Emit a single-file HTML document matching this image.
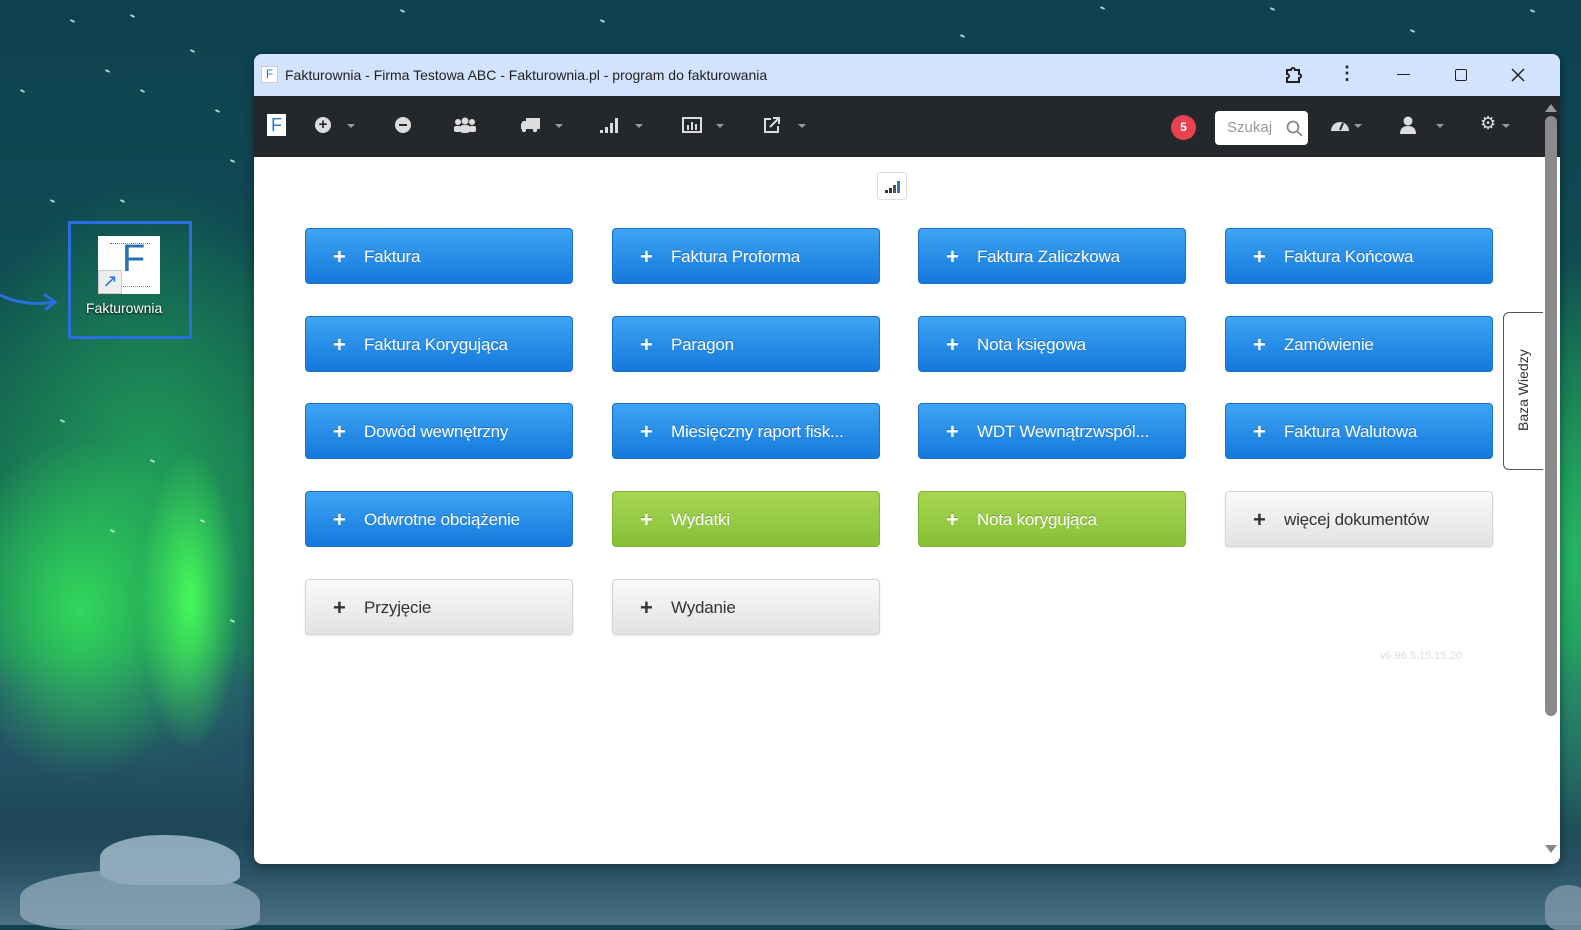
<!DOCTYPE html>
<html><head><meta charset="utf-8"><style>
*{box-sizing:border-box;margin:0;padding:0}
body{width:1581px;height:925px;overflow:hidden;position:relative;font-family:"Liberation Sans",Arial,sans-serif;background:#0f4150}
.bg{position:absolute;left:0;top:0;width:1581px;height:925px;
background:
radial-gradient(ellipse 50px 150px at 190px 600px,rgba(70,250,90,1),rgba(50,230,90,0) 100%),
radial-gradient(ellipse 130px 170px at 80px 610px,rgba(50,220,90,.95),rgba(40,200,90,0) 100%),
radial-gradient(ellipse 200px 300px at 150px 480px,rgba(35,170,90,.8),rgba(30,150,90,0) 100%),
radial-gradient(ellipse 60px 300px at 1575px 560px,rgba(40,200,100,.8),rgba(40,200,100,0) 100%),
linear-gradient(180deg,#0f4150 0%,#0f4a52 25%,#146050 45%,#1a7458 60%,#1d6e5e 70%,#24566a 74%,#234f62 84%,#1d4656 90%,#2e566a 95%,#4d7185 100%);}
.ice{position:absolute;background:#a9c0ce;border-radius:50% 60% 20% 30%;opacity:.8}
.star{position:absolute;width:5px;height:2px;background:#cfe;border-radius:1px;transform:rotate(25deg);opacity:.8}
.win{position:absolute;left:254px;top:54px;width:1306px;height:810px;background:#fff;border-radius:8px;overflow:hidden;box-shadow:0 2px 10px rgba(0,0,0,.4)}
.title{height:42px;background:#d3e3fd;position:relative;font-size:14px;color:#1f1f1f}
.title .t{position:absolute;left:31px;top:13px}
.fav{position:absolute;left:7px;top:12px;width:17px;height:17px;background:#fff;border:1px solid #ccc;color:#2b7bc0;font-size:12px;text-align:center;line-height:15px}
.tb{position:absolute;top:42px;left:0;width:1306px;height:61px;background:#24282c}
.ic{position:absolute;color:#ddd;font-size:16px;top:20px}
.car{position:absolute;top:28px;width:0;height:0;border-left:4px solid transparent;border-right:4px solid transparent;border-top:4px solid #999}
.btn{position:absolute;width:268px;height:56px;border-radius:4px;font-size:17px;color:#fff;text-shadow:0 -1px 0 rgba(0,0,0,.25);line-height:56px;padding-left:58px;white-space:nowrap;letter-spacing:-.2px}
.btn b{position:absolute;left:27px;top:0;font-size:22px;font-weight:bold}
.blue{background:linear-gradient(#3ea4f4,#1479dc);border:1px solid #1a70c8}
.green{background:linear-gradient(#a6d652,#88c038);border:1px solid #80b636}
.grey{background:linear-gradient(#fafafa,#e2e2e2);border:1px solid #d4d4d4;color:#333;text-shadow:none;box-shadow:0 1px 2px rgba(0,0,0,.1)}
</style></head><body>
<div class="bg"></div>
<div class="ice" style="left:100px;top:835px;width:140px;height:50px"></div>
<div class="ice" style="left:20px;top:870px;width:240px;height:60px;background:#8fa9b8"></div>
<div class="ice" style="left:1545px;top:885px;width:50px;height:45px;background:#7e98a8"></div>
<div class="star" style="left:70px;top:20px"></div><div class="star" style="left:130px;top:15px"></div><div class="star" style="left:105px;top:70px"></div><div class="star" style="left:190px;top:50px"></div><div class="star" style="left:140px;top:90px"></div><div class="star" style="left:215px;top:110px"></div><div class="star" style="left:50px;top:200px"></div><div class="star" style="left:120px;top:200px"></div><div class="star" style="left:230px;top:160px"></div><div class="star" style="left:20px;top:90px"></div><div class="star" style="left:60px;top:420px"></div><div class="star" style="left:150px;top:460px"></div><div class="star" style="left:200px;top:520px"></div><div class="star" style="left:110px;top:530px"></div><div class="star" style="left:230px;top:620px"></div><div class="star" style="left:1100px;top:7px"></div><div class="star" style="left:1270px;top:8px"></div><div class="star" style="left:1410px;top:30px"></div><div class="star" style="left:1530px;top:10px"></div><div class="star" style="left:960px;top:35px"></div><div class="star" style="left:600px;top:20px"></div><div class="star" style="left:400px;top:10px"></div>
<svg style="position:absolute;left:0;top:285px" width="62" height="30"><path d="M0 10 Q25 22 54 17" fill="none" stroke="#2a6ee0" stroke-width="3"/><path d="M44 9 L55 17 L45 25" fill="none" stroke="#2a6ee0" stroke-width="3"/></svg>
<div style="position:absolute;left:68px;top:221px;width:124px;height:118px;border:3px solid #2a6ee0"></div>
<div style="position:absolute;left:98px;top:236px;width:62px;height:58px;background:#fff"><div style="position:absolute;left:12px;top:7px;width:40px;border-top:1px dotted #c55"></div><div style="position:absolute;left:24px;top:3px;font-size:38px;color:#2b6fb3;line-height:40px">F</div><div style="position:absolute;left:12px;top:50px;width:40px;border-top:1px dotted #c55"></div><div style="position:absolute;left:0;top:34px;width:24px;height:24px;background:#eee;border:1px solid #ccc;color:#1a7ad8;font-size:18px;line-height:20px;text-align:center">↗</div></div>
<div style="position:absolute;left:86px;top:300px;font-size:14px;color:#fff;text-shadow:0 1px 2px #000">Fakturownia</div>

<div class="win">
<div class="title"><div class="fav">F</div><div class="t">Fakturownia - Firma Testowa ABC - Fakturownia.pl - program do fakturowania</div>
<svg style="position:absolute;left:1028px;top:11px" width="22" height="22"><path d="M5 5 H9 a2 2 0 0 1 4 0 H17 V9 a2 2 0 0 1 0 4 V17 H5 V13 a2 2 0 0 0 0 -4 Z" fill="none" stroke="#222" stroke-width="2"/></svg>
<div style="position:absolute;left:1084px;top:9px;font-size:18px;font-weight:bold">⋮</div>
<div style="position:absolute;left:1143px;top:20px;width:13px;border-top:1.5px solid #222"></div>
<div style="position:absolute;left:1201px;top:15px;width:12px;height:12px;border:1.5px solid #222;border-radius:2px"></div>
<svg style="position:absolute;left:1257px;top:14px" width="14" height="14"><path d="M1 1 L13 13 M13 1 L1 13" stroke="#222" stroke-width="1.5"/></svg>
</div>
<div class="tb">
<div style="position:absolute;left:13px;top:18px;width:19px;height:22px;background:#fff;color:#2b7bc0;font-size:18px;text-align:center;line-height:22px">F</div>
<div style="position:absolute;left:61px;top:21px;width:16px;height:16px;border-radius:50%;background:#ddd;color:#24282c;font-size:15px;font-weight:bold;text-align:center;line-height:16px">+</div><div class="car" style="left:93px"></div>
<div style="position:absolute;left:141px;top:21px;width:16px;height:16px;border-radius:50%;background:#ddd"><div style="margin:7px 4px;height:2px;background:#24282c"></div></div>
<svg style="position:absolute;left:200px;top:20px" width="22" height="18"><circle cx="11" cy="5" r="3.5" fill="#ddd"/><circle cx="4" cy="6" r="3" fill="#ddd"/><circle cx="18" cy="6" r="3" fill="#ddd"/><rect x="6" y="9" width="10" height="8" rx="3" fill="#ddd"/><rect x="0" y="10" width="7" height="6" rx="2" fill="#ddd"/><rect x="15" y="10" width="7" height="6" rx="2" fill="#ddd"/></svg>
<svg style="position:absolute;left:266px;top:21px" width="20" height="16"><rect x="6" y="1" width="14" height="11" fill="#ddd"/><path d="M1 12 V7 L3 4 H6 V12Z" fill="#ddd"/><circle cx="4" cy="13" r="2.2" fill="#ddd"/><circle cx="15" cy="13" r="2.2" fill="#ddd"/></svg><div class="car" style="left:301px"></div>
<svg style="position:absolute;left:346px;top:21px" width="20" height="16"><rect x="0" y="13" width="3" height="3" fill="#ddd"/><rect x="5" y="10" width="3" height="6" fill="#ddd"/><rect x="10" y="6" width="3" height="10" fill="#ddd"/><rect x="15" y="1" width="3" height="15" fill="#ddd"/></svg><div class="car" style="left:381px"></div>
<svg style="position:absolute;left:428px;top:21px" width="20" height="16"><rect x="1" y="1" width="18" height="14" fill="none" stroke="#ddd" stroke-width="2"/><rect x="5" y="8" width="2" height="5" fill="#ddd"/><rect x="9" y="5" width="2" height="8" fill="#ddd"/><rect x="13" y="7" width="2" height="6" fill="#ddd"/></svg><div class="car" style="left:462px"></div>
<svg style="position:absolute;left:509px;top:20px" width="18" height="18"><path d="M8 3 H2 V16 H15 V10" fill="none" stroke="#ddd" stroke-width="2"/><path d="M7 11 L16 2 M10 2 H16 V8" fill="none" stroke="#ddd" stroke-width="2"/></svg><div class="car" style="left:544px"></div>
<div style="position:absolute;left:917px;top:19px;width:25px;height:25px;border-radius:50%;background:#e8414f;color:#fff;font-size:12px;font-weight:bold;text-align:center;line-height:25px">5</div>
<div style="position:absolute;left:961px;top:15px;width:93px;height:34px;border-radius:4px;background:#fff;color:#999;font-size:15px;line-height:34px;padding-left:12px">Szukaj<svg style="position:absolute;right:5px;top:9px" width="17" height="17"><circle cx="7" cy="7" r="5.5" fill="none" stroke="#888" stroke-width="1.8"/><path d="M11 11 L16 16" stroke="#888" stroke-width="1.8"/></svg></div>
<svg style="position:absolute;left:1076px;top:22px" width="20" height="14"><path d="M1 13 A9 9 0 0 1 19 13 Z" fill="#ddd"/><path d="M10 12 L13 5" stroke="#24282c" stroke-width="2"/></svg><div class="car" style="left:1100px"></div>
<svg style="position:absolute;left:1146px;top:20px" width="16" height="18"><circle cx="8" cy="5" r="4.5" fill="#ddd"/><path d="M0 18 Q0 10 8 10 Q16 10 16 18Z" fill="#ddd"/></svg><div class="car" style="left:1182px"></div>
<div class="ic" style="left:1226px;top:17px;font-size:18px">⚙</div><div class="car" style="left:1248px"></div>
<div style="position:absolute;left:1291px;top:8px;width:0;height:0;border-left:6px solid transparent;border-right:6px solid transparent;border-bottom:8px solid #999"></div>
</div>
<div style="position:absolute;left:1291px;top:62px;width:12px;height:600px;background:#8a8a8a;border-radius:6px"></div>
<div style="position:absolute;left:1291px;top:791px;width:0;height:0;border-left:6px solid transparent;border-right:6px solid transparent;border-top:8px solid #888"></div>
<div style="position:absolute;left:623px;top:118px;width:30px;height:28px;border:1px solid #ddd;border-radius:3px"><svg style="position:absolute;left:7px;top:7px" width="16" height="13"><rect x="0" y="10" width="3" height="3" fill="#333"/><rect x="4" y="8" width="3" height="5" fill="#333"/><rect x="8" y="5" width="3" height="8" fill="#555"/><rect x="12" y="1" width="3" height="12" fill="#3b6fb6"/></svg></div>
<div style="position:absolute;left:1249px;top:258px;width:40px;height:158px;border:1px solid #555;border-right:none;border-radius:6px 0 0 6px;background:#fff"><div style="position:absolute;left:11px;top:118px;transform:rotate(-90deg);transform-origin:0 0;font-size:14px;color:#333;white-space:nowrap">Baza Wiedzy</div></div>
<div style="position:absolute;left:1126px;top:596px;font-size:11px;color:#ddd">v6.96.5.15.15.20</div>
</div>

<div class="btn blue" style="left:305px;top:228px"><b>+</b>Faktura</div>
<div class="btn blue" style="left:612px;top:228px"><b>+</b>Faktura Proforma</div>
<div class="btn blue" style="left:918px;top:228px"><b>+</b>Faktura Zaliczkowa</div>
<div class="btn blue" style="left:1225px;top:228px"><b>+</b>Faktura Końcowa</div>
<div class="btn blue" style="left:305px;top:316px"><b>+</b>Faktura Korygująca</div>
<div class="btn blue" style="left:612px;top:316px"><b>+</b>Paragon</div>
<div class="btn blue" style="left:918px;top:316px"><b>+</b>Nota księgowa</div>
<div class="btn blue" style="left:1225px;top:316px"><b>+</b>Zamówienie</div>
<div class="btn blue" style="left:305px;top:403px"><b>+</b>Dowód wewnętrzny</div>
<div class="btn blue" style="left:612px;top:403px"><b>+</b>Miesięczny raport fisk...</div>
<div class="btn blue" style="left:918px;top:403px"><b>+</b>WDT Wewnątrzwspól...</div>
<div class="btn blue" style="left:1225px;top:403px"><b>+</b>Faktura Walutowa</div>
<div class="btn blue" style="left:305px;top:491px"><b>+</b>Odwrotne obciążenie</div>
<div class="btn green" style="left:612px;top:491px"><b>+</b>Wydatki</div>
<div class="btn green" style="left:918px;top:491px"><b>+</b>Nota korygująca</div>
<div class="btn grey" style="left:1225px;top:491px"><b>+</b>więcej dokumentów</div>
<div class="btn grey" style="left:305px;top:579px"><b>+</b>Przyjęcie</div>
<div class="btn grey" style="left:612px;top:579px"><b>+</b>Wydanie</div>
</body></html>
